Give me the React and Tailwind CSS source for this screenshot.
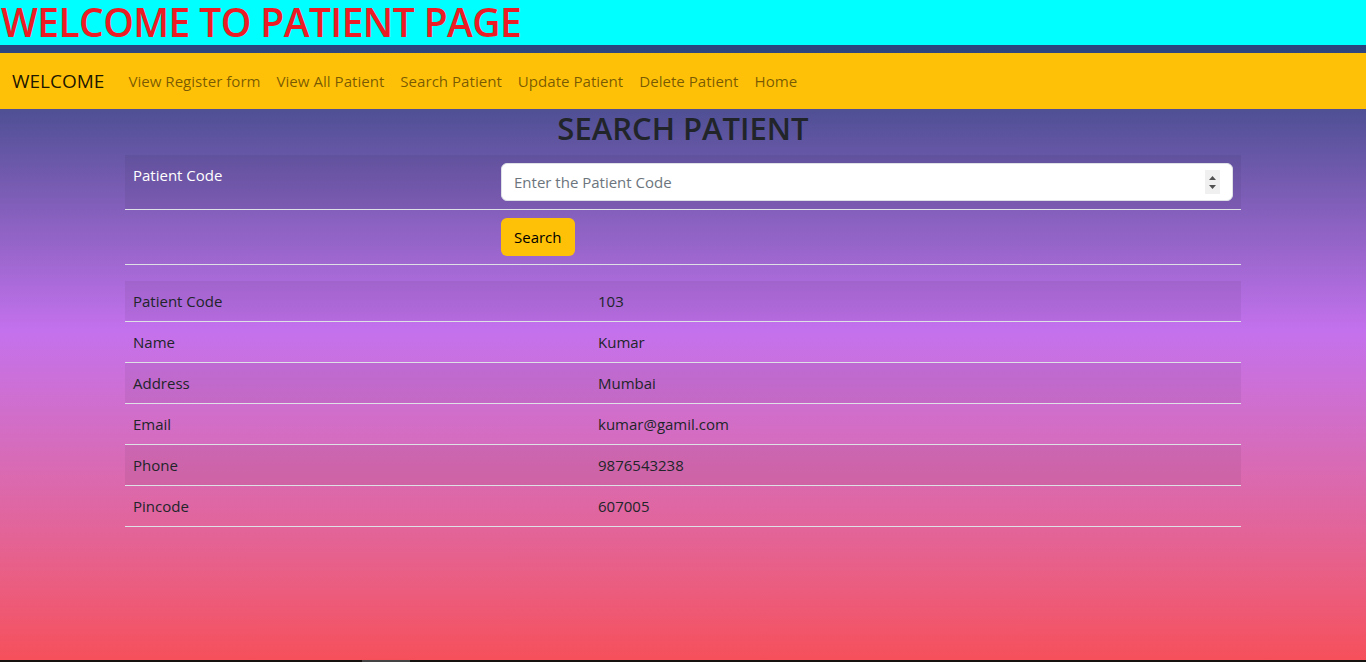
import React from 'react'

const LINKS = ['View Register form', 'View All Patient', 'Search Patient', 'Update Patient', 'Delete Patient', 'Home']

const PATIENT = [
  ['Patient Code', '103'],
  ['Name', 'Kumar'],
  ['Address', 'Mumbai'],
  ['Email', 'kumar@gamil.com'],
  ['Phone', '9876543238'],
  ['Pincode', '607005'],
]

export default function App() {
  return (
    <div
      className="flex flex-col h-[662px] overflow-hidden bg-gradient-to-b from-[#003c6c] via-[#c471ed] to-[#f64f59] text-[#212529]"
      style={{ fontFamily: '"Open Sans", "Noto Sans", sans-serif' }}
    >
      {/* Page header */}
      <header className="h-[45px] bg-[#00ffff] flex items-start">
        <h1 className="text-[39px] leading-[44px] font-semibold tracking-[-0.6px] text-[#ed1c24] pl-[1px]">WELCOME TO PATIENT PAGE</h1>
      </header>

      {/* Navbar */}
      <nav className="mt-[8px] h-[56px] bg-[#ffc107] flex items-center px-[12px]">
        <span className="text-[19px] text-black/90 mr-[16px]">WELCOME</span>
        <ul className="flex items-center">
          {LINKS.map((l) => (
            <li key={l} className="px-[8px] text-[15.1px] text-black/55">{l}</li>
          ))}
        </ul>
      </nav>

      <main className="flex-1 w-[1116px] mx-auto">
        <h2 className="text-center text-[31px] font-semibold leading-[38px] mb-[8px] text-[#212529]">SEARCH PATIENT</h2>

        {/* Search form */}
        <table className="w-full border-collapse mb-[16px]">
          <tbody>
            <tr className="bg-black/5 border-b border-[#dee2e6]">
              <td className="w-[368px] p-[8px] align-top text-white text-[15px] leading-[24px] font-medium">Patient Code</td>
              <td className="p-[8px]">
                <div className="relative">
                  <input
                    type="text"
                    placeholder="Enter the Patient Code"
                    className="block w-full h-[38px] rounded-[6px] border border-[#dee2e6] bg-white px-[12px] text-[15px] placeholder:text-[#6c757d] outline-none"
                  />
                  <div className="absolute right-[13px] top-[7px] w-[15px] h-[24px] bg-[#f0f0f0] flex flex-col items-center justify-center gap-[5px]">
                    <svg width="7" height="4" viewBox="0 0 7 4"><path d="M0 4 L3.5 0 L7 4 Z" fill="#505050" /></svg>
                    <svg width="7" height="4" viewBox="0 0 7 4"><path d="M0 0 L7 0 L3.5 4 Z" fill="#505050" /></svg>
                  </div>
                </div>
              </td>
            </tr>
            <tr className="border-b border-[#dee2e6]">
              <td className="p-[8px]"></td>
              <td className="p-[8px]">
                <button className="h-[38px] px-[13px] rounded-[6px] bg-[#ffc107] text-black text-[15px]">Search</button>
              </td>
            </tr>
          </tbody>
        </table>

        {/* Result */}
        <table className="w-full border-collapse">
          <tbody>
            {PATIENT.map(([k, v], i) => (
              <tr key={k} className={`border-b border-[#dee2e6] ${i % 2 === 0 ? 'bg-black/5' : ''}`}>
                <td className="w-[465px] px-[8px] py-[8px] text-[15px] leading-[24px]">{k}</td>
                <td className="px-[8px] py-[8px] text-[15px] leading-[24px]">{v}</td>
              </tr>
            ))}
          </tbody>
        </table>
      </main>

      {/* Scrollbar strip */}
      <div className="h-[2px] bg-[#151210] flex">
        <div className="ml-[362px] w-[48px] bg-[#444444]" />
      </div>
    </div>
  )
}
